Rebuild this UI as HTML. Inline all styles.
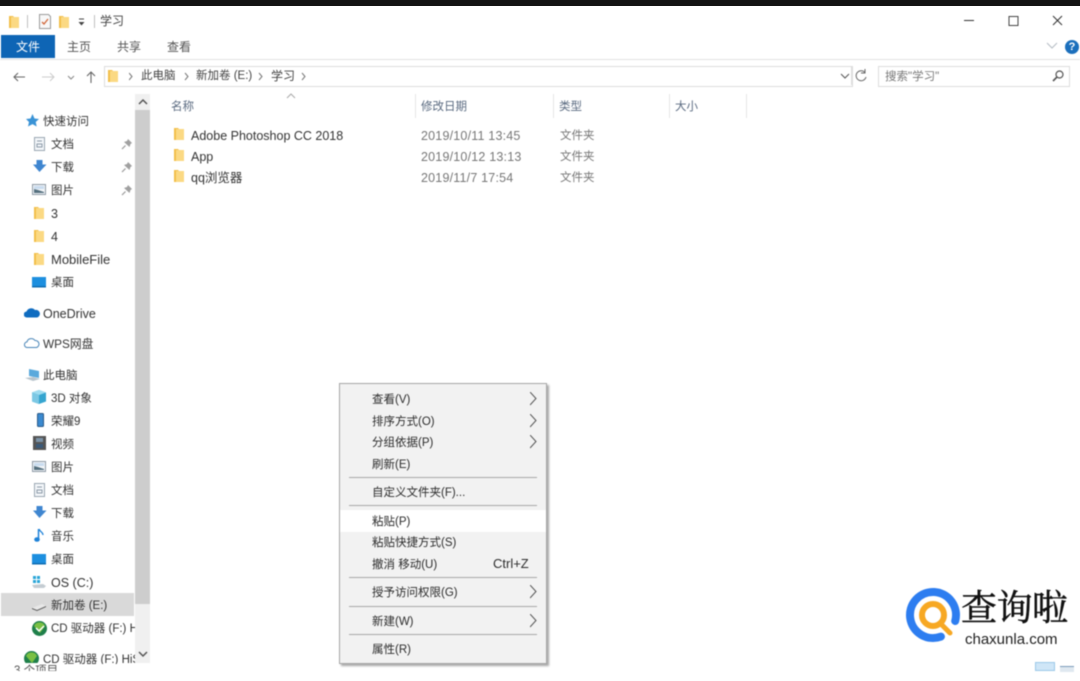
<!DOCTYPE html>
<html lang="zh"><head><meta charset="utf-8"><title>学习</title>
<style>
html,body{margin:0;padding:0;background:#fff;width:1080px;height:671px;overflow:hidden}
#p{position:absolute;left:-10px;top:-10px;width:1100px;height:691px;overflow:hidden;background:#fff;font-family:"Liberation Sans","Noto Sans CJK SC",sans-serif;font-size:11.500px;color:#333;filter:blur(.4px)}
#p div,#p svg{position:absolute}
.t{white-space:nowrap;line-height:16px;height:16px;margin-top:1px}
.t[style*="font-size"]{margin-top:0}
.g{color:#777}
.h{color:#5a6a80}
.t.d{color:#777;font-size:12.500px;letter-spacing:.2px;margin-top:0}
.m{color:#2c2c2c;left:372px}
.l{background:#a8a8a8;height:1px;left:349px;width:188px}
</style></head><body><div id="p"><div style="left:10px;top:10px;width:1080px;height:671px">
<svg width="0" height="0"><defs>
<g id="f"><path d="M0 1h4l1 1v11H0z" fill="#f2bf4a"/><path d="M2 2h8v11H2z" fill="#fbd983"/></g>
<path id="c" d="M0 0l6 6.500-6 6.500" fill="none" stroke="#555" stroke-width="1"/>
<g id="pin"><path d="M1 11l3.500-3.500" stroke="#999" stroke-width="1.200"/><path d="M7 1l4 4-1.500 1-1 3L3 4l3-1z" fill="#a0a0a0"/></g>
<g id="doc"><path d="M.5.500h10v13H.5z" fill="#f4f7fa" stroke="#9aa7b2"/><path d="M3 4h5M3 7h5v3H3z" fill="none" stroke="#8c9aa8"/></g>
<g id="dl"><path d="M3.500 0h6v4.500h4L6.500 12 0 4.500h3.500z" fill="#3f86d0"/></g>
<g id="pic"><path d="M.5.500h13v10H.5z" fill="#f2f5f8" stroke="#8d99a5"/><path d="M2 2h10v3H2z" fill="#c9dcef"/><path d="M2 5l4 1 6 2v1H2z" fill="#55707f"/></g>
<g id="desk"><path d="M0 0h14v10H0z" fill="#1d8fdf"/><path d="M0 9h14v1.500H0z" fill="#0f6cb2"/></g>
</defs></svg>

<svg style="left:9px;top:15px" width="10" height="13"><use href="#f"/></svg>
<div style="left:27px;top:15px;width:1px;height:13px;background:#c0c0c0"></div>
<svg style="left:38px;top:14px" width="14" height="16"><path d="M1.500.500h9l2 2v12h-11z" fill="#f8f8f8" stroke="#9b9b9b"/><path d="M4 8l2 2 4-5" fill="none" stroke="#d2693c" stroke-width="1.300"/></svg>
<svg style="left:59px;top:15px" width="10" height="13"><use href="#f"/></svg>
<svg style="left:77px;top:18px" width="9" height="9"><path d="M2 1h5" stroke="#444"/><path d="M1.500 4h6l-3 3.500z" fill="#444"/></svg>
<div style="left:94px;top:15px;width:1px;height:13px;background:#c0c0c0"></div>
<div class="t" style="left:100px;top:13px;color:#444;font-size:12px">学习</div>

<svg style="left:964px;top:15px" width="104" height="12"><path d="M0 5.500h10" stroke="#333"/><path d="M45 1.500h9v9h-9z" fill="none" stroke="#444"/><path d="M89 1l9 9M98 1l-9 9" stroke="#333" fill="none"/></svg>

<div style="left:1px;top:35px;width:54px;height:23px;background:#0e65b5"></div>
<div class="t" style="left:16px;top:39px;color:#fff;font-size:12px">文件</div>
<div class="t" style="left:67px;top:39px;color:#555;font-size:12px">主页</div>
<div class="t" style="left:117px;top:39px;color:#555;font-size:12px">共享</div>
<div class="t" style="left:167px;top:39px;color:#555;font-size:12px">查看</div>
<div style="left:0;top:59px;width:1080px;height:1px;background:#e2e2e2"></div>
<svg style="left:1046px;top:42px" width="12" height="8"><path d="M1 1l5 5 5-5" fill="none" stroke="#b5bcc4"/></svg>
<div style="left:1065px;top:40px;width:14px;height:14px;border-radius:50%;background:#1b6fbc;color:#fff;font-size:11px;font-weight:bold;line-height:14px;text-align:center">?</div>

<svg style="left:12px;top:70px" width="90" height="14"><path d="M13 7H2M6 3L2 7l4 4" fill="none" stroke="#666" stroke-width="1.100"/><path d="M42 7H30M38 3l4 4-4 4" fill="none" stroke="#ccc"/><path d="M56 6l3 3 3-3" fill="none" stroke="#888"/><path d="M79 13V2M75 6l4-4 4 4" fill="none" stroke="#666" stroke-width="1.100"/></svg>
<div style="left:104px;top:66px;width:747px;height:19px;border:1px solid #dcdcdc"></div>
<svg style="left:108px;top:69px" width="10" height="13"><use href="#f"/></svg>
<svg style="left:129px;top:72px" width="180" height="10"><g fill="none" stroke="#777"><path d="M0 1l3 3.500-3 3.500"/><path d="M56 1l3 3.500-3 3.500"/><path d="M130 1l3 3.500-3 3.500"/><path d="M173 1l3 3.500-3 3.500"/></g></svg>
<div class="t" style="left:141px;top:67px;color:#444">此电脑</div>
<div class="t" style="left:196px;top:67px;color:#444">新加卷 (E:)</div>
<div class="t" style="left:271px;top:68px;color:#444;font-size:12px">学习</div>
<svg style="left:840px;top:68px" width="28" height="16"><path d="M1 6l4 4 4-4" fill="none" stroke="#555"/><path d="M25 4.500A5 5 0 1 0 26 9M25 1v4h-4" fill="none" stroke="#666"/></svg>
<div style="left:851px;top:66px;width:1px;height:19px;background:#dcdcdc"></div>
<div style="left:878px;top:66px;width:190px;height:19px;border:1px solid #dcdcdc"></div>
<div class="t" style="left:885px;top:68px;color:#777">搜索"学习"</div>
<svg style="left:1052px;top:70px" width="12" height="12"><circle cx="7.500" cy="4.500" r="3.500" fill="none" stroke="#555" stroke-width="1.200"/><path d="M5 7l-4 4" stroke="#555" stroke-width="1.600"/></svg>

<!-- sidebar scrollbar -->
<div style="left:135px;top:94px;width:15px;height:569px;background:#f0f0f0"></div>
<div style="left:135px;top:110px;width:15px;height:494px;background:#cdcdcd"></div>
<svg style="left:138px;top:98px" width="10" height="8"><path d="M1 6l4-4 4 4" fill="none" stroke="#555" stroke-width="1.500"/></svg>
<svg style="left:138px;top:650px" width="10" height="8"><path d="M1 2l4 4 4-4" fill="none" stroke="#555" stroke-width="1.500"/></svg>

<!-- sidebar -->
<svg style="left:26px;top:114px" width="13" height="13"><path d="M6.500 0l2 4.500 4.500.5-3.300 3 1 4.500-4.200-2.400-4.500 2.400 1-4.500L0 5l4.500-.5z" fill="#3a93d6"/></svg>
<div class="t" style="left:43px;top:113px">快速访问</div>
<svg style="left:34px;top:137px" width="12" height="14"><use href="#doc"/></svg>
<div class="t" style="left:51px;top:136px">文档</div>
<svg style="left:121px;top:138px" width="12" height="12"><use href="#pin"/></svg>
<svg style="left:33px;top:160px" width="14" height="13"><use href="#dl"/></svg>
<div class="t" style="left:51px;top:159px">下载</div>
<svg style="left:121px;top:161px" width="12" height="12"><use href="#pin"/></svg>
<svg style="left:32px;top:184px" width="14" height="11"><use href="#pic"/></svg>
<div class="t" style="left:51px;top:182px">图片</div>
<svg style="left:121px;top:184px" width="12" height="12"><use href="#pin"/></svg>
<svg style="left:34px;top:206px" width="10" height="14"><use href="#f"/></svg>
<div class="t" style="left:51px;top:206px;font-size:12.500px">3</div>
<svg style="left:34px;top:229px" width="10" height="14"><use href="#f"/></svg>
<div class="t" style="left:51px;top:229px;font-size:12.500px">4</div>
<svg style="left:34px;top:252px" width="10" height="14"><use href="#f"/></svg>
<div class="t" style="left:51px;top:252px;font-size:13px">MobileFile</div>
<svg style="left:32px;top:277px" width="14" height="11"><use href="#desk"/></svg>
<div class="t" style="left:51px;top:274px">桌面</div>

<svg style="left:24px;top:307px" width="16" height="11"><path d="M3 10.500a3 3 0 0 1-.5-6A5 5 0 0 1 11 3a3.800 3.800 0 0 1 2 7.500z" fill="#0f6cc0"/></svg>
<div class="t" style="left:43px;top:306px;font-size:12.500px">OneDrive</div>
<svg style="left:24px;top:337px" width="16" height="12"><path d="M3.500 10.500a2.800 2.800 0 0 1-.5-5.600A4.500 4.500 0 0 1 11 3.500a3.600 3.600 0 0 1 1.500 7z" fill="#fff" stroke="#4a86b8"/></svg>
<div class="t" style="left:43px;top:336px;font-size:11.800px">WPS网盘</div>
<svg style="left:25px;top:368px" width="16" height="14"><path d="M4 1l10 2v7L4 8z" fill="#5aa9dc"/><path d="M0 10l8-1 7 2-7 2z" fill="#b8c4cc"/></svg>
<div class="t" style="left:43px;top:367px">此电脑</div>

<svg style="left:32px;top:390px" width="14" height="14"><path d="M7 0l7 2.500v9L7 14 0 11.500v-9z" fill="#35a5d0"/><path d="M7 5L0 2.500 7 0l7 2.500z" fill="#9fdcf0"/><path d="M0 2.500L7 5v9l-7-2.500z" fill="#7cc8e4"/></svg>
<div class="t" style="left:51px;top:390px">3D 对象</div>
<svg style="left:37px;top:413px" width="7" height="14"><rect x=".5" y=".5" width="6" height="13" rx="1" fill="#3b8ad0" stroke="#2a5a88"/></svg>
<div class="t" style="left:51px;top:413px">荣耀9</div>
<svg style="left:33px;top:436px" width="13" height="14"><rect width="13" height="14" fill="#555"/><rect x="3" y="2" width="7" height="4" fill="#7b93a8"/><rect x="3" y="8" width="7" height="4" fill="#3a5a7a"/></svg>
<div class="t" style="left:51px;top:436px">视频</div>
<svg style="left:32px;top:461px" width="14" height="11"><use href="#pic"/></svg>
<div class="t" style="left:51px;top:459px">图片</div>
<svg style="left:34px;top:483px" width="12" height="14"><use href="#doc"/></svg>
<div class="t" style="left:51px;top:482px">文档</div>
<svg style="left:33px;top:506px" width="14" height="13"><use href="#dl"/></svg>
<div class="t" style="left:51px;top:505px">下载</div>
<svg style="left:34px;top:528px" width="11" height="15"><path d="M4.500 1v10.500" stroke="#1e82d8" stroke-width="1.500"/><ellipse cx="3" cy="11.500" rx="2.800" ry="2.300" fill="#1e82d8"/><path d="M5 1c1 3 4 3 4 6" fill="none" stroke="#1e82d8" stroke-width="1.300"/></svg>
<div class="t" style="left:51px;top:528px">音乐</div>
<svg style="left:32px;top:554px" width="14" height="11"><use href="#desk"/></svg>
<div class="t" style="left:51px;top:551px">桌面</div>
<svg style="left:31px;top:575px" width="16" height="14"><path d="M2 1h3v3H2zM6 1h3v3H6zM2 5h3v3H2zM6 5h3v3H6z" fill="#2aa6d8"/><path d="M1 10l11-1 3 2-2 2H3z" fill="#c4ccd2"/></svg>
<div class="t" style="left:51px;top:575px;font-size:12.500px">OS (C:)</div>
<div style="left:1px;top:593px;width:133px;height:23px;background:#d9d9d9"></div>
<svg style="left:31px;top:601px" width="16" height="10"><path d="M1 7l10-4 4 2-9 4z" fill="#e8e8e8"/><path d="M1 7l5 2 9-4v1L6 10 1 8z" fill="#555"/></svg>
<div class="t" style="left:51px;top:597px">新加卷 (E:)</div>
<svg style="left:32px;top:621px" width="15" height="15"><circle cx="7.500" cy="7.500" r="7.500" fill="#1f7f4a"/><path d="M2 5a6 6 0 0 1 11 0L8 12z" fill="#7ac043"/><path d="M4 7l3 3 5-5" fill="none" stroke="#fff" stroke-width="1.500"/></svg>
<div style="left:51px;top:620px;width:84px;height:17px;overflow:hidden"><div class="t" style="left:0;top:0">CD 驱动器 (F:) HiSuite</div></div>
<svg style="left:24px;top:651px" width="15" height="12"><circle cx="7.500" cy="7.500" r="7.500" fill="#1f7f4a"/><path d="M2 5a6 6 0 0 1 11 0L8 12z" fill="#7ac043"/></svg>
<div style="left:43px;top:651px;width:92px;height:13px;overflow:hidden"><div class="t" style="left:0;top:0">CD 驱动器 (F:) HiSuite</div></div>
<div style="left:0;top:664px;width:1080px;height:7px;overflow:hidden"><div class="t" style="left:14px;top:-2px;color:#555">3 个项目</div></div>

<!-- header -->
<svg style="left:286px;top:93px" width="10" height="6"><path d="M1 5l4-4 4 4" fill="none" stroke="#aaa"/></svg>
<div class="t h" style="left:171px;top:98px">名称</div>
<div class="t h" style="left:421px;top:98px">修改日期</div>
<div class="t h" style="left:559px;top:98px">类型</div>
<div class="t h" style="left:675px;top:98px">大小</div>
<div style="left:415px;top:94px;width:1px;height:24px;background:#e5e5e5"></div>
<div style="left:553px;top:94px;width:1px;height:24px;background:#e5e5e5"></div>
<div style="left:669px;top:94px;width:1px;height:24px;background:#e5e5e5"></div>
<div style="left:746px;top:94px;width:1px;height:24px;background:#e5e5e5"></div>

<!-- files -->
<svg style="left:174px;top:127px" width="11" height="14"><use href="#f"/></svg>
<div class="t" style="left:191px;top:128px;font-size:12.500px">Adobe Photoshop CC 2018</div>
<div class="t d" style="left:421px;top:128px">2019/10/11 13:45</div>
<div class="t g" style="left:560px;top:127px">文件夹</div>
<svg style="left:174px;top:148px" width="11" height="14"><use href="#f"/></svg>
<div class="t" style="left:191px;top:149px;font-size:12.500px">App</div>
<div class="t d" style="left:421px;top:149px">2019/10/12 13:13</div>
<div class="t g" style="left:560px;top:148px">文件夹</div>
<svg style="left:174px;top:169px" width="11" height="14"><use href="#f"/></svg>
<div class="t" style="left:191px;top:170px;font-size:12.500px">qq浏览器</div>
<div class="t d" style="left:421px;top:170px">2019/11/7 17:54</div>
<div class="t g" style="left:560px;top:169px">文件夹</div>

<!-- context menu -->
<div style="left:339px;top:383px;width:206px;height:279px;background:#f2f2f2;border:1px solid #a6a6a6;box-shadow:2px 2px 2px rgba(0,0,0,.35)"></div>
<div style="left:340px;top:510px;width:206px;height:22px;background:#fff"></div>
<div class="t m" style="top:391px">查看(V)</div>
<div class="t m" style="top:413px">排序方式(O)</div>
<div class="t m" style="top:434px">分组依据(P)</div>
<div class="t m" style="top:456px">刷新(E)</div>
<div class="l" style="top:477px"></div>
<div class="t m" style="top:484px">自定义文件夹(F)...</div>
<div class="l" style="top:505px"></div>
<div class="t m" style="top:513px">粘贴(P)</div>
<div class="t m" style="top:534px">粘贴快捷方式(S)</div>
<div class="t m" style="top:556px">撤消 移动(U)</div>
<div class="t" style="left:493px;top:556px;font-size:13px;color:#2c2c2c">Ctrl+Z</div>
<div class="l" style="top:577px"></div>
<div class="t m" style="top:584px">授予访问权限(G)</div>
<div class="l" style="top:606px"></div>
<div class="t m" style="top:613px">新建(W)</div>
<div class="l" style="top:634px"></div>
<div class="t m" style="top:641px">属性(R)</div>
<svg style="left:530px;top:392px" width="8" height="14"><use href="#c"/></svg>
<svg style="left:530px;top:414px" width="8" height="14"><use href="#c"/></svg>
<svg style="left:530px;top:435px" width="8" height="14"><use href="#c"/></svg>
<svg style="left:530px;top:585px" width="8" height="14"><use href="#c"/></svg>
<svg style="left:530px;top:614px" width="8" height="14"><use href="#c"/></svg>

<!-- watermark -->
<svg style="left:904px;top:586px" width="60" height="60"><path d="M51.200 35A23 23 0 1 0 36.900 50.600" fill="none" stroke="#2d7df0" stroke-width="8" stroke-linecap="round"/><circle cx="29" cy="29" r="11" fill="none" stroke="#f7a823" stroke-width="6"/><path d="M37 38l9 9" stroke="#f7a823" stroke-width="5" stroke-linecap="round"/></svg>
<div class="t" style="left:961px;top:586px;height:44px;line-height:44px;font-size:36px;font-family:'Liberation Serif','Noto Serif CJK SC',serif;color:#111;letter-spacing:-.500px;-webkit-text-stroke:.5px #111">查询啦</div>
<div class="t" style="left:965px;top:632px;font-size:15px;color:#222">chaxunla.com</div>

<div style="left:1035px;top:662px;width:20px;height:9px;background:#cfe6f7;border:1px solid #9cc8e8;box-sizing:border-box"></div>
<div style="left:1060px;top:666px;width:14px;height:5px;background:#dfe8f0;border-top:1px solid #7a9cba"></div>
</div></div>
<div style="position:absolute;left:0;top:0;width:1080px;height:6px;background:#141414"></div>
</body></html>
